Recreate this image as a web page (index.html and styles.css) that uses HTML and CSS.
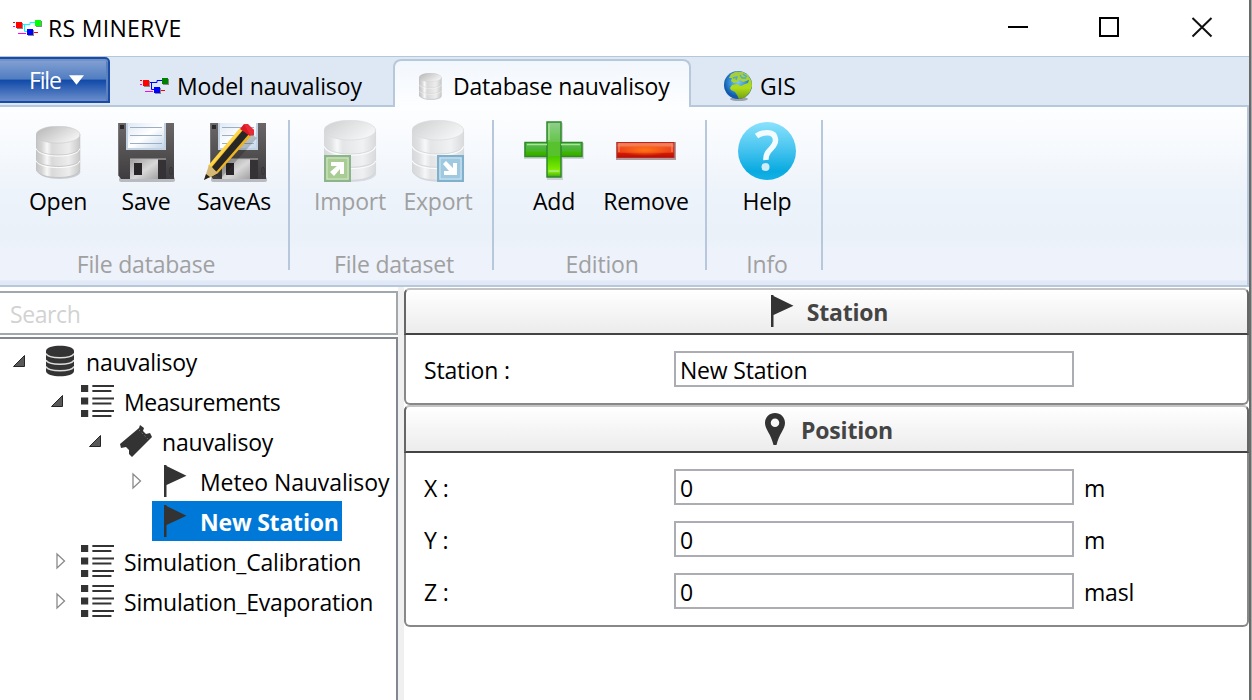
FILE: index.html
```html
<!DOCTYPE html>
<html lang="en">
<head>
<meta charset="utf-8">
<title>RS MINERVE</title>
<link rel="stylesheet" href="styles.css">
</head>
<body>
<svg class="defs" width="0" height="0" aria-hidden="true">
  <defs>
    <linearGradient id="steel" x1="0" x2="1"><stop offset="0" stop-color="#c4c4c4"/><stop offset=".13" stop-color="#d4d4d4"/><stop offset=".25" stop-color="#f8f8f8"/><stop offset=".36" stop-color="#d9d9d9"/><stop offset=".75" stop-color="#ededed"/><stop offset="1" stop-color="#c8c8c8"/></linearGradient>
    <linearGradient id="lid" x1="0" x2="1" y2=".6"><stop offset="0" stop-color="#b4b4b4"/><stop offset="1" stop-color="#f3f3f3"/></linearGradient>
    <linearGradient id="body" x2="0" y2="1"><stop offset="0" stop-color="#6b6769"/><stop offset="1" stop-color="#3e3c3e"/></linearGradient>
    <linearGradient id="paper" x2="1" y2="1"><stop offset="0" stop-color="#dfe9f4"/><stop offset=".5" stop-color="#fff"/><stop offset="1" stop-color="#c4d7eb"/></linearGradient>
    <linearGradient id="shutter" x2="1" y2="1"><stop offset="0" stop-color="#9b9b9b"/><stop offset=".55" stop-color="#d8d8d8"/><stop offset="1" stop-color="#a2a2a2"/></linearGradient>
    <linearGradient id="green" x2="0" y2="1"><stop offset="0" stop-color="#8fcf8f"/><stop offset=".5" stop-color="#55c02e"/><stop offset=".63" stop-color="#48c900"/><stop offset=".9" stop-color="#87f000"/><stop offset="1" stop-color="#3da317"/></linearGradient>
    <linearGradient id="greenbar" x2="0" y2="1"><stop offset="0" stop-color="#5eb860"/><stop offset=".6" stop-color="#45b529"/><stop offset=".7" stop-color="#3eb600"/><stop offset="1" stop-color="#37a800"/></linearGradient>
    <linearGradient id="red" x2="0" y2="1"><stop offset="0" stop-color="#e44a38"/><stop offset=".2" stop-color="#f37c50"/><stop offset=".35" stop-color="#ed4b20"/><stop offset=".65" stop-color="#ef4213"/><stop offset=".72" stop-color="#cf1b06"/><stop offset="1" stop-color="#b80d04"/></linearGradient>
    <radialGradient id="glow"><stop offset="0" stop-color="#ff7416"/><stop offset="1" stop-color="#ff7416" stop-opacity="0"/></radialGradient>
    <linearGradient id="blue" x2="0" y2="1"><stop offset="0" stop-color="#8be2fd"/><stop offset=".5" stop-color="#42c2ee"/><stop offset=".85" stop-color="#08aae0"/><stop offset="1" stop-color="#16b1e5"/></linearGradient>
    <radialGradient id="sea" cx=".5" cy=".4"><stop offset="0" stop-color="#80c8ed"/><stop offset=".7" stop-color="#2c83ce"/><stop offset="1" stop-color="#125bac"/></radialGradient>
    <linearGradient id="land" x2="0" y2="1"><stop offset="0" stop-color="#a3cb45"/><stop offset=".6" stop-color="#b0dc16"/><stop offset="1" stop-color="#719f14"/></linearGradient>

    <symbol id="drum" viewBox="0 0 44 52">
      <ellipse cx="23" cy="45" rx="20.500" ry="7" fill="#000" opacity=".16"/>
      <path d="M0 8V43C3 53 41 53 43 43V8Z" fill="url(#steel)"/>
      <path d="M0 8V43C3 53 41 53 43 43V8" fill="none" stroke="#b4b4b4" stroke-width=".5"/>
      <ellipse cx="21.500" cy="8.500" rx="21.500" ry="8.300" fill="url(#lid)" stroke="#c4c4c4" stroke-width=".5"/>
      <path d="M0 21C3 31 41 31 43 21M0 33C3 42 41 42 43 33" fill="none" stroke="#c8c8c8" stroke-width="1"/>
      <path d="M0 22.200C3 32 41 32 43 22.200M0 34.200C3 43 41 43 43 34.200" fill="none" stroke="#fff" stroke-width=".9"/>
    </symbol>

    <symbol id="floppy" viewBox="0 0 60 62">
      <rect x="3" y="55" width="56" height="5" rx="2" fill="#000" opacity=".23"/>
      <path d="M2 1H58V57H5L2 53Z" fill="url(#body)"/>
      <path d="M2.500 1V53" stroke="#777" stroke-width="1"/>
      <rect x="4" y="3" width="4" height="4" fill="#29282a"/>
      <rect x="10" y="1" width="40" height="27" fill="#c3d2e3"/>
      <rect x="12" y="1" width="36" height="25" fill="url(#paper)"/>
      <path d="M14 5.500H46M14 13.500H46M14 21.500H46" stroke="#9baec5" stroke-width="1.200"/>
      <rect x="14" y="37" width="28" height="20" fill="url(#shutter)"/>
      <path d="M14 37H50" stroke="#b8b8b8" stroke-width="1"/>
      <rect x="18" y="41" width="8" height="12" fill="#282628"/>
      <rect x="42" y="38" width="8" height="19" fill="#343234"/>
      <ellipse cx="55" cy="49" rx="1.300" ry="4" fill="none" stroke="#353335"/>
    </symbol>

    <symbol id="network" viewBox="0 0 30 18">
      <path d="M0 3.500H2M0 7.500H2" stroke="#f00"/>
      <path d="M0 7.500H2M5 14.500H13" stroke="#f0f"/>
      <path d="M9 5.500H17V3.500H22M11.500 6V12.500H14" fill="none" stroke="currentColor"/>
      <path d="M21 13.500H25" stroke="#f00"/>
      <path d="M4 4H10V10H4ZM23 2H29V8H23ZM15 11H21V17H15Z" fill="#888"/>
      <rect x="3" y="3" width="6" height="6" fill="#f00"/>
      <rect x="22" y="1" width="6" height="6"/>
      <rect x="14" y="10" width="6" height="6" fill="#00f"/>
    </symbol>

    <symbol id="list" viewBox="0 0 32 32">
      <path d="M0 0H7V7H0ZM0 12.500H7V19.500H0ZM0 25H7V32H0Z" fill="#333"/>
      <path d="M11 1H32M11 6H29.500M11 13.500H32M11 18.500H29.500M11 26H32M11 31H29.500" stroke="#333" stroke-width="2"/>
    </symbol>
    <symbol id="flag" viewBox="0 0 24 32"><path d="M1 0H3.500V1L23.500 10.700L3.500 20V32H1Z" fill="#333"/></symbol>
    <symbol id="open" viewBox="0 0 14 14"><path d="M12.500 1.500V12.500H1.500Z" fill="#595959" stroke="#262626"/></symbol>
    <symbol id="closed" viewBox="0 0 10 18"><path d="M1 2L8.500 9L1 16Z" fill="#fff" stroke="#8a8a8a" stroke-width="1.300"/></symbol>
  </defs>
</svg>

<div class="screen">
<main class="window">
  <header class="titlebar">
    <svg class="net net-app"><use href="#network"/></svg>
    <span class="app-name">RS MINERVE</span>
    <svg class="controls" viewBox="0 0 210 24"><path d="M3 10H23" stroke="#000" stroke-width="2"/><rect x="95" y="1" width="18" height="18" fill="none" stroke="#000" stroke-width="2"/><path d="M187.500 1L206.500 19.500M206.500 1L187.500 19.500" stroke="#111" stroke-width="2"/></svg>
  </header>

  <nav class="tabs">
    <div class="file-button"><span>File</span><svg width="15" height="10" viewBox="0 0 16 10"><path d="M0 0H16L8 10Z" fill="#fff"/></svg></div>
    <div class="tab tab-model"><svg class="net net-model"><use href="#network"/></svg><span>Model nauvalisoy</span></div>
    <div class="tab tab-active"><svg width="23" height="27" viewBox="0 0 44 52" preserveAspectRatio="none"><use href="#drum"/></svg><span>Database nauvalisoy</span></div>
    <div class="tab tab-gis">
      <svg width="30" height="32" viewBox="0 0 30 32"><ellipse cx="16" cy="29" rx="9" ry="2" fill="#000" opacity=".3"/><circle cx="15" cy="15" r="14" fill="url(#sea)"/><path d="M8 4L13 1.500L20 2L25 5L28.500 11L29 16L27 22L22 27.500L16 29L14 25L12 22L8 20L7 18L9 15L14 14L18 16L22 14L25 13L26 10L23 11L20 12L17 10L14 12L11 13L8 11L9 8L6 8Z" fill="url(#land)"/><path d="M10 8L14 7L13 10M17 5L19 8L23 8M20 4L24 7" fill="none" stroke="#4da8d5" stroke-width="1.300"/></svg>
      <span>GIS</span>
    </div>
  </nav>

  <section class="ribbon">
    <div class="group group-first">
      <div class="buttons">
        <div class="tool"><div class="art art-open"><svg width="45" height="53" viewBox="0 0 44 52"><use href="#drum"/></svg></div><span>Open</span></div>
        <div class="tool"><div class="art art-disk"><svg width="60" height="62"><use href="#floppy"/></svg></div><span>Save</span></div>
        <div class="tool"><div class="art art-disk art-pencil"><svg width="64" height="62" viewBox="-2 0 64 62"><use href="#floppy" x="2" width="60" height="62"/><path d="M8 53L45 12L51 16L15 56Z" fill="#000" opacity=".2"/><path d="M3 44L34 7L45 14L12 51L3 56Z" fill="#edb321"/><path d="M6 45L37 8L43 12L10 50Z" fill="#272727"/><path d="M3 45L35 7" stroke="#ffd548" stroke-width="3"/><path d="M34 7L38 2L48 8L44 14Z" fill="#dd1724"/><path d="M38 2H42L48 8V13L44 13Z" fill="#e92b38"/><path d="M3 43L12 51L-2 58Z" fill="#d6b977"/><path d="M0 52L4 55L-2 58Z" fill="#222"/></svg></div><span>SaveAs</span></div>
      </div>
      <div class="caption">File database</div>
    </div>
    <div class="group disabled">
      <div class="buttons">
        <div class="tool"><div class="art"><svg width="56" height="62" viewBox="0 0 56 62"><use href="#drum" x="2" width="53" height="62" opacity=".62"/><rect x="3" y="36" width="25" height="25" fill="#a9cc94" stroke="#8cb58c" stroke-width="2"/><rect x="5" y="38" width="21" height="21" fill="none" stroke="#d7e8ca"/><path d="M9 42H22V54H18V49L12 56L8 52L15 46H9Z" fill="#fff"/></svg></div><span>Import</span></div>
        <div class="tool"><div class="art"><svg width="56" height="62" viewBox="0 0 56 62"><use href="#drum" x="2" width="53" height="62" opacity=".62"/><rect x="28" y="36" width="25" height="25" fill="#9ec9e0" stroke="#81b0cc" stroke-width="2"/><rect x="30" y="38" width="21" height="21" fill="none" stroke="#d2e7f3"/><path d="M33 44L36 41L43 48V43H47V55H34V51H39Z" fill="#fff"/></svg></div><span>Export</span></div>
      </div>
      <div class="caption">File dataset</div>
    </div>
    <div class="group group-edit">
      <div class="buttons">
        <div class="tool"><div class="art"><svg width="60" height="62" viewBox="0 0 60 62"><path d="M23 3H39V23H60V39H39V60H23V39H0V23H23Z" fill="#000" opacity=".14"/><rect x="1" y="22.500" width="57" height="14" fill="url(#greenbar)" stroke="#2d8c23" stroke-width="1.500"/><rect x="23" y="2" width="14" height="55" fill="url(#green)" stroke="#2e882b" stroke-width="1.500"/><rect x="24" y="22" width="12" height="14" fill="#57c22d"/><path d="M3 24.500H23M37 24.500H56M25 4V20M25 51H35" stroke="#a9e690" stroke-width="1.300"/></svg></div><span>Add</span></div>
        <div class="tool tool-wide"><div class="art"><svg width="60" height="62" viewBox="0 0 60 62"><rect x="0" y="22" width="60" height="18" fill="#602525" opacity=".45"/><rect x="1" y="22.500" width="57" height="15" fill="url(#red)" stroke="#b52922"/><ellipse cx="29" cy="30" rx="25" ry="6" fill="url(#glow)"/><path d="M3 24H56M3 23V32M56 23V32" stroke="#f69073"/></svg></div><span>Remove</span></div>
      </div>
      <div class="caption">Edition</div>
    </div>
    <div class="group">
      <div class="buttons">
        <div class="tool"><div class="art"><svg width="60" height="62" viewBox="0 0 60 62"><circle cx="30" cy="31" r="29" fill="url(#blue)"/><path d="M19.500 16C25 12 38 10 38.500 19.500C39 29 28 29 29 40" fill="none" stroke="#f2fbff" stroke-width="5.500"/><circle cx="28.500" cy="47" r="4" fill="#cdebf9"/></svg></div><span>Help</span></div>
      </div>
      <div class="caption">Info</div>
    </div>
  </section>

  <div class="workspace">
    <aside class="sidebar">
      <div class="search">Search</div>
      <div class="tree">
        <div class="row"><div class="twist"><svg class="tw-open"><use href="#open"/></svg></div><div class="node"><div class="node-icon"><svg width="28" height="32" viewBox="0 0 28 32"><path d="M0 6C0-1 28-1 28 6V26C28 33 0 33 0 26Z" fill="#333"/><path d="M0 8.500C2 14 26 14 28 8.500M0 15C2 20.500 26 20.500 28 15M0 21.500C2 27 26 27 28 21.500" fill="none" stroke="#ddd" stroke-width="1.500"/></svg></div><span>nauvalisoy</span></div></div>
        <div class="row level-1"><div class="twist"><svg class="tw-open"><use href="#open"/></svg></div><div class="node"><div class="node-icon icon-list"><svg width="33" height="32" viewBox="0 0 32 32" preserveAspectRatio="none"><use href="#list" width="32" height="32"/></svg></div><span class="snug">Measurements</span></div></div>
        <div class="row level-2"><div class="twist"><svg class="tw-open"><use href="#open"/></svg></div><div class="node"><div class="node-icon"><svg width="32" height="32" viewBox="0 0 32 32"><path d="M20 0L24 3L23 6L26 9L30 8L32 12L12 32L9 29V25L6 22L1 23L0 19L19 3Z" fill="#333"/><path d="M19 5L28 14" stroke="#999" stroke-dasharray="1 3"/></svg></div><span>nauvalisoy</span></div></div>
        <div class="row level-3"><div class="twist"><svg class="tw-closed"><use href="#closed"/></svg></div><div class="node"><div class="node-icon flag"><svg width="24" height="32"><use href="#flag"/></svg></div><span class="loose">Meteo Nauvalisoy</span></div></div>
        <div class="row level-3"><div class="twist"></div><div class="node selected"><div class="node-icon flag"><svg width="24" height="32"><use href="#flag"/></svg></div><span>New Station</span></div></div>
        <div class="row level-1"><div class="twist"><svg class="tw-closed"><use href="#closed"/></svg></div><div class="node"><div class="node-icon icon-list"><svg width="33" height="32" viewBox="0 0 32 32" preserveAspectRatio="none"><use href="#list" width="32" height="32"/></svg></div><span>Simulation_Calibration</span></div></div>
        <div class="row level-1"><div class="twist"><svg class="tw-closed"><use href="#closed"/></svg></div><div class="node"><div class="node-icon icon-list"><svg width="33" height="32" viewBox="0 0 32 32" preserveAspectRatio="none"><use href="#list" width="32" height="32"/></svg></div><span>Simulation_Evaporation</span></div></div>
      </div>
    </aside>
    <div class="splitter"></div>
    <div class="details">
      <section class="panel panel-station">
        <h2 class="panel-head"><svg width="24" height="32"><use href="#flag"/></svg><span>Station</span></h2>
        <div class="fields"><label class="field"><span class="field-name">Station :</span><span class="box">New Station</span></label></div>
      </section>
      <section class="panel panel-position">
        <h2 class="panel-head head-position"><svg width="20" height="32" viewBox="0 0 20 32"><path d="M10 0C4.500 0 0 4 0 10C0 16 6 21 8.500 32H11.500C14 21 20 16 20 10C20 4 15.500 0 10 0ZM10 5.500A4.200 4.200 0 1 1 10 14A4.200 4.200 0 1 1 10 5.500Z" fill="#333" fill-rule="evenodd"/></svg><span>Position</span></h2>
        <div class="fields">
          <label class="field"><span class="field-name">X :</span><span class="box">0</span><span class="unit">m</span></label>
          <label class="field"><span class="field-name">Y :</span><span class="box">0</span><span class="unit">m</span></label>
          <label class="field"><span class="field-name">Z :</span><span class="box">0</span><span class="unit">masl</span></label>
        </div>
      </section>
    </div>
  </div>
</main>
<div class="desktop-edge"></div>
</div>
</body>
</html>
```

FILE: styles.css
```css
* { box-sizing: border-box; }
body { margin: 0; font: 23px/32px "Open Sans", "Noto Sans", sans-serif; letter-spacing: -.2px; color: #000; background: #fff; overflow: hidden; }
svg { display: block; flex: none; }
span { white-space: nowrap; }
.defs { position: absolute; }
.screen { display: flex; width: 1252px; height: 700px; }
.window { width: 1251px; height: 700px; border-right: 2px solid #686a6b; display: flex; flex-direction: column; }
.desktop-edge { width: 1px; background: #aaa9a5; }

.titlebar { height: 56px; display: flex; align-items: center; padding: 0 34px 0 13px; flex: none; }
.net { width: 30px; height: 18px; }
.net-app { color: #0ff; fill: #0f0; }
.net-model { color: #00f; fill: #008000; }
.app-name { margin-left: 5px; letter-spacing: .3px; }
.controls { width: 210px; height: 24px; margin: 2px 0 0 auto; }

.tabs { height: 51px; border-top: 1px solid #b7c7da; background: linear-gradient(#b8c8dc, #b8c8dc) bottom / 100% 2px no-repeat, #dee8f5; display: flex; align-items: flex-start; flex: none; }
.file-button { width: 110px; height: 46px; border: 2px solid #1b4ca5; border-left: 0; border-radius: 0 5px 0 0; display: flex; align-items: center; padding: 0 0 0 29px; color: #fff; background: linear-gradient(#86a3d3, #507dc1 48%, #1049a8 50%, #6b8ecb 100%); box-shadow: inset 0 2px #7191c9, inset -2px 0 #5b80be; letter-spacing: -1.2px; gap: 8px; }
.tab { display: flex; align-items: center; height: 51px; padding-top: 6px; }
.tab-model { width: 283px; padding-left: 30px; gap: 7px; letter-spacing: -.1px; }
.tab-active { width: 298px; margin-top: 2px; height: 49px; border: 2px solid #b8c8dc; border-bottom: 0; border-radius: 8px 8px 0 0; background: linear-gradient(#f2f7fd, #fdfeff); padding: 3px 0 0 24px; gap: 11px; }
.tab-gis { padding-left: 32px; gap: 7px; letter-spacing: 0; }

.ribbon { height: 180px; border-right: 2px solid #b8c8dc; border-bottom: 2px solid #b8c8dc; background: linear-gradient(#fdfeff 0, #f6f9fd 25%, #edf3fa 48%, #eaf1f9 72%, #edf2fb 80%, #edf2fb 97%, #e0e9f5 98%); display: flex; padding-top: 13px; flex: none; }
.group { height: 150px; padding: 0 10px 0 16px; border-right: 2px solid #b8c8dc; }
.group-first { padding-left: 14px; }
.group-edit { padding-right: 11px; }
.buttons { display: flex; }
.tool { width: 88px; display: flex; flex-direction: column; align-items: center; }
.tool-wide { width: 96px; }
.art { height: 62px; display: flex; align-items: center; justify-content: center; }
.art-open { padding-top: 2px; }
.art-disk { padding-top: 4px; }
.art-pencil { padding-left: 3px; }
.tool span { margin-top: 3px; }
.caption { text-align: center; color: #a0a0a0; margin-top: 31px; }
.disabled { color: #a0a0a0; }

.workspace { display: flex; flex: 1; min-height: 0; }
.sidebar { width: 398px; padding-top: 4px; display: flex; flex-direction: column; gap: 2px; }
.search { height: 44px; flex: none; border: 2px solid #a1a8ad; border-left: 0; color: #d2d2d2; padding: 5px 10px; letter-spacing: -.4px; }
.tree { flex: 1; border: 2px solid #828790; border-left: 0; border-bottom: 0; padding-top: 2px; }
.row { display: flex; height: 40px; }
.level-1 { padding-left: 38px; }
.level-2 { padding-left: 76px; }
.level-3 { padding-left: 114px; }
.twist { width: 38px; }
.tw-open { width: 14px; height: 14px; margin: 13px 0 0 12px; }
.tw-closed { width: 10px; height: 18px; margin: 11px 0 0 18px; }
.node { display: flex; align-items: center; padding: 0 4px 0 6px; height: 40px; }
.node span { padding-top: 1px; }
.node .snug { letter-spacing: -.4px; }
.node .loose { letter-spacing: -.1px; }
.node-icon { width: 32px; margin-right: 10px; display: flex; justify-content: center; flex: none; }
.icon-list { padding-right: 2px; }
.flag { padding-left: 1px; }
.selected { width: 190px; background: #0078d7; color: #fff; font-weight: 700; }
.splitter { width: 6px; background: #f0f0f0; }
.details { flex: 1; padding-top: 1px; }

.panel { border: 2px solid #888; border-radius: 6px; background: #fff; }
.panel-station { height: 117px; border-top-color: #c4c4c4; }
.panel-position { height: 222px; border-top-color: #c4c4c4; }
.panel-head { height: 47px; margin: -2px -2px 0; border: 2px solid; border-color: #c4c4c4 #666 #444 #666; border-radius: 6px 6px 0 0; background: linear-gradient(#fff, #ececec); font-size: 23px; font-weight: 700; color: #444; display: flex; justify-content: center; align-items: center; gap: 13px; padding: 0 0 1px 5px; }
.panel-head span { padding-top: 2px; }
.head-position { height: 48px; gap: 16px; }
.fields { padding: 16px 18px; display: grid; gap: 16px; }
.field { display: grid; grid-template-columns: 250px 400px auto; height: 36px; align-items: center; }
.field-name { padding-top: 2px; }
.box { height: 36px; border: 2px solid #abadb3; padding: 1px 4px; line-height: 32px; }
.unit { padding: 2px 0 0 10px; }
```
